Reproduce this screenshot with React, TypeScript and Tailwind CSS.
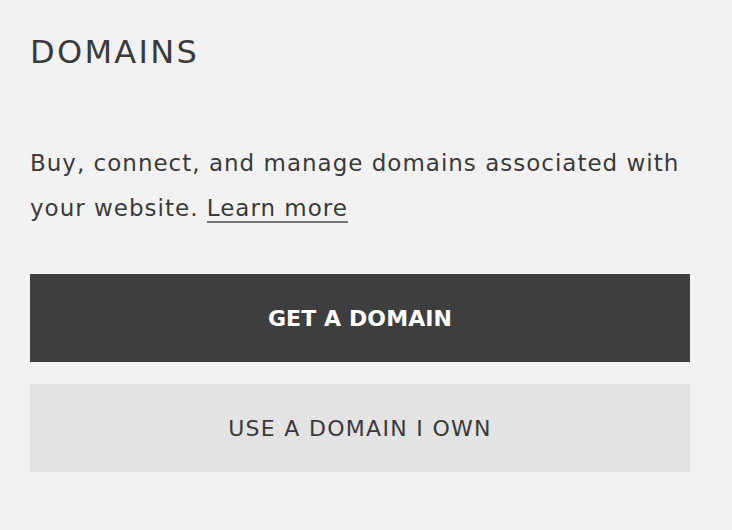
import React from 'react'

const App = () => {
  return (
    <div className='min-h-[530px] w-full bg-[#f2f2f2] px-[30px] pt-[33px] text-[#3a3a3a] [font-family:"DejaVu_Sans","Open_Sans",sans-serif]'>
      <h2 className='text-[32px] font-normal leading-[38px] tracking-[2.3px]'>DOMAINS</h2>

      <p className='mt-[70px] w-[670px] text-[23px] leading-[45px] tracking-[1px]'>
        Buy, connect, and manage domains associated with your website.{' '}
        <a href='#' className='border-b-2 border-[#777]'>Learn more</a>
      </p>

      <div className='mt-[43px] flex flex-col gap-[22px] w-[660px]'>
        <button className='h-[88px] bg-[#3e3e3e] text-[22px] font-bold tracking-[0.1px] text-white'>
          GET A DOMAIN
        </button>
        <button className='h-[88px] bg-[#e3e3e3] text-[22px] font-normal tracking-[1.3px] text-[#3a3a3a]'>
          USE A DOMAIN I OWN
        </button>
      </div>
    </div>
  )
}

export default App
